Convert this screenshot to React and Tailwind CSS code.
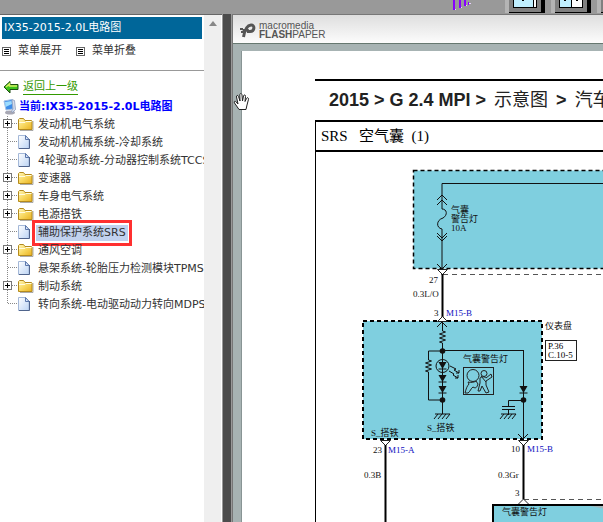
import clsx from 'clsx';

const menuItems = [
  { label: '发动机电气系统', folder: true },
  { label: '发动机机械系统-冷却系统' },
  { label: '4轮驱动系统-分动器控制系统TCCS' },
  { label: '变速器', folder: true },
  { label: '车身电气系统', folder: true },
  { label: '电源搭铁', folder: true },
  { label: '辅助保护系统SRS', selected: true },
  { label: '通风空调', folder: true },
  { label: '悬架系统-轮胎压力检测模块TPMS' },
  { label: '制动系统', folder: true },
  { label: '转向系统-电动驱动动力转向MDPS' },
];

function FolderIcon() {
  return (
    <svg width="16" height="16" viewBox="0 0 16 16" className="shrink-0">
      <defs>
        <linearGradient id="folder" x1="0" y1="0" x2="1" y2="1">
          <stop offset="0" stopColor="#fff6b8" />
          <stop offset="0.5" stopColor="#f8d860" />
          <stop offset="1" stopColor="#e8b020" />
        </linearGradient>
      </defs>
      <path d="M2 13.500h13V4" fill="none" stroke="#777" strokeOpacity="0.6" />
      <path d="M.5 12.500V2.500l1-1h4l1.500 2h6.500l.5.5v8.500z" fill="url(#folder)" stroke="#b48a1c" />
      <path d="M1 5.500h6l1-1h5.500" fill="none" stroke="#fffbe0" />
    </svg>
  );
}

function PageIcon() {
  return (
    <svg width="16" height="16" viewBox="0 0 16 16" className="shrink-0">
      <defs>
        <linearGradient id="sheet" x1="0" y1="0" x2="1" y2="1">
          <stop offset="0" stopColor="#fff" />
          <stop offset="1" stopColor="#bcd4f4" />
        </linearGradient>
      </defs>
      <path d="M.5.500h7l3.500 3.500v9.500H.5z" fill="url(#sheet)" stroke="#a4b8d8" />
      <path d="M1 13.500h10.500V4" fill="none" stroke="#50648c" />
      <path d="M7.500.500v4h3.500z" fill="#dfeafc" stroke="#5c78ac" />
    </svg>
  );
}

function BackIcon() {
  return (
    <svg width="16" height="14" viewBox="0 0 16 14" className="shrink-0">
      <path d="M1 7l6-5.500v3h8v5h-8v3.500z" fill="#3ec41c" stroke="#1c4c10" />
      <path d="M3 7l3.500-3v2h7.500" fill="none" stroke="#d4f060" strokeWidth="1.500" />
    </svg>
  );
}

function ComputerIcon() {
  return (
    <svg width="14" height="16" viewBox="0 0 14 16" className="shrink-0">
      <ellipse cx="7" cy="13.500" rx="5" ry="2" fill="#a8a8b4" />
      <path d="M1 2l8-1.500 1 9.500-7 1z" fill="#3c8ce8" stroke="#a4c0e4" />
      <path d="M2 3l6.500-1 .5 3-6.500 3z" fill="#9cdcff" />
      <path d="M9 .5l2.500 1 1 9-3 3-1-1.500 1.500-2z" fill="#d4dcec" stroke="#8094b8" strokeWidth=".7" />
    </svg>
  );
}

function ListIcon() {
  return (
    <svg width="9" height="9" viewBox="0 0 9 9" className="shrink-0" shapeRendering="crispEdges">
      <path d="M.5.5h8v8h-8z" fill="#fff" stroke="#666" />
      <path d="M2 2.500h5M2 4.500h5M2 6.500h5" stroke="#000" />
    </svg>
  );
}

function Branch({ folder, last }) {
  return (
    <svg width="15" height="18" viewBox="0 0 15 18" className="shrink-0" shapeRendering="crispEdges">
      <path d={last ? 'M4.500 0v8' : 'M4.500 0v18'} stroke="#888" strokeDasharray="1 1" />
      <path d="M5 7.500h10" stroke="#888" strokeDasharray="1 1" />
      {folder && (
        <>
          <path d="M.5 3.500h8v8h-8z" fill="#fff" stroke="#777" />
          <path d="M2 7.500h5M4.500 5v5" stroke="#000" />
        </>
      )}
    </svg>
  );
}

function MenuItem({ item, last }) {
  return (
    <li className="flex h-[18px] items-center">
      <Branch folder={item.folder} last={last} />
      <span className="flex w-[18px] shrink-0">{item.folder ? <FolderIcon /> : <PageIcon />}</span>
      <a
        href="#"
        className={clsx(
          'relative whitespace-nowrap px-[2px] leading-4 text-[#333]',
          item.selected && 'bg-[#c1d2ee]'
        )}
      >
        {item.label}
        {item.selected && <span className="absolute -inset-x-1 -inset-y-[5px] border-3 border-[#ff3030]" />}
      </a>
    </li>
  );
}

function Sidebar() {
  return (
    <aside className="flex w-[222px] shrink-0 border-t border-[#666] bg-white">
      <div className="min-w-0 flex-1 overflow-hidden">
        <h1 className="mx-[2px] mt-[2px] h-[22px] bg-[#069] pl-[2px] leading-[21px] text-white">
          IX35-2015-2.0L电路图
        </h1>
        <div className="flex h-8 items-center gap-[14px] border-b border-[#999] pb-[6px] pl-[2px] text-[#333]">
          <button className="flex items-center gap-[7px]">
            <ListIcon />
            菜单展开
          </button>
          <button className="flex items-center gap-[7px]">
            <ListIcon />
            菜单折叠
          </button>
        </div>
        <div className="flex h-[27px] items-center gap-1 pl-[3px] pt-1">
          <BackIcon />
          <a href="#" className="border-b border-[#390] leading-[15px] text-[#390]">
            返回上一级
          </a>
        </div>
        <div className="flex h-[18px] items-center gap-[2px] pl-[3px] font-bold text-[#00f]">
          <ComputerIcon />
          当前:IX35-2015-2.0L电路图
        </div>
        <ul className="pl-[3px]">
          {menuItems.map((item, i) => (
            <MenuItem key={item.label} item={item} last={i === menuItems.length - 1} />
          ))}
        </ul>
      </div>
      <div className="flex w-[18px] justify-center border-r border-white bg-[#efefef] pt-[6px]">
        <svg width="8" height="5" viewBox="0 0 8 5">
          <path d="M4 0l4 5H0z" fill="#888" />
        </svg>
      </div>
    </aside>
  );
}

function ViewButton({ split, label }) {
  return (
    <button aria-label={label} className="flex h-[13px] w-10 shrink-0">
      <svg width="40" height="13" viewBox="0 0 40 13" shapeRendering="crispEdges">
        <path d="M0 0h4v13H0z" fill="#b4b4b4" />
        <path d="M4 0h32v12H4z" fill="#808080" />
        <path d="M36 0h4v13H4v-1h32z" fill="#000" />
        <path d="M8 0h24v8H8z" fill="#000" />
        <path d="M9 0h22v7H9z" fill="#fff" />
        <path d={split ? 'M9 0h11v7H9z' : 'M9 0h19v7H9z'} fill="#bfefff" />
        <path d={split ? 'M20 0h1v7h-1zM13 0h2v1h-2zM25 0h2v1h-2z' : 'M28 0h1v7h-1zM17 0h2v1h-2z'} fill="#000" />
      </svg>
    </button>
  );
}

function TopBar() {
  return (
    <header className="flex h-[14px] shrink-0 items-start justify-end gap-[6px] overflow-hidden bg-[#999]">
      <svg width="20" height="11" viewBox="0 0 20 11" className="mr-[26px] shrink-0" shapeRendering="crispEdges">
        <path d="M0 0h2v10H0zM6 0h2v8H6zM11 0h2v6h-2zM15 2h1v3h-1z" fill="#80f" />
        <path d="M2 9h1v1H2zM8 7h1v1H8zM13 5h1v1h-1zM16 3h2v1h-2z" fill="#e8d0ff" />
      </svg>
      <ViewButton label="Single view" />
      <ViewButton label="Split view" split />
      <div className="w-[6px] shrink-0 overflow-hidden">
        <ViewButton label="Full view" />
      </div>
    </header>
  );
}

function PaperBar() {
  return (
    <div className="flex h-[29px] shrink-0 items-center gap-[3px] border-b border-[#667870] bg-linear-to-b from-[#dedede] to-[#fcfcfc] pl-[7px] pt-[2px] text-[#555]">
      <svg width="16" height="15" viewBox="0 0 16 15" aria-hidden="true">
        <path d="M3.500 14C4.500 8 6.500 2.500 11 2c4-.2 4 6.500-1 6.500H7" fill="none" stroke="#555" strokeWidth="3" />
        <path d="M2 6h7l-1 2.500H3M0 5h3v2H0zM1 8h3v2H1z" fill="#555" />
      </svg>
      <div className="font-['Liberation_Sans',Arial,sans-serif] text-[10px] leading-[9px]">
        <div>macromedia</div>
        <div>
          <b>FLASH</b>PAPER
        </div>
      </div>
    </div>
  );
}

const wire = { fill: 'none', stroke: '#111', strokeWidth: 1 };

function Ground({ x, y }) {
  return <path d={`M${x - 7} ${y}h15M${x - 4} ${y}l-4 5M${x} ${y}l-4 5M${x + 4} ${y}l-4 5M${x + 8} ${y}l-4 5`} {...wire} />;
}

function Diode({ x, y }) {
  return (
    <g>
      <path d={`M${x - 4} ${y}h8l-4 7z`} fill="#111" />
      <path d={`M${x - 4} ${y + 7}h8`} {...wire} />
    </g>
  );
}

function AirbagIcon() {
  return (
    <g fill="none" stroke="#222" strokeWidth="1">
      <rect x="463.500" y="367.500" width="30" height="27" />
      <circle cx="473" cy="375.500" r="6" />
      <path d="M468 382c3 1 7 0 8-1l2 3c-1 3-2 5-5 3-2 1-3 5-5 6h-3c1-4 2-7 4-9z" />
      <circle cx="484" cy="373.500" r="3" />
      <path d="M480 378c2-2 5-1 6 0l5-4 1 3-6 4v4l3 7-3 1-4-7-2 5h-2l2-8z" />
      <path d="M481 376l5 6" />
    </g>
  );
}

function WiringDiagram() {
  return (
    <svg
      width="287"
      height="370"
      viewBox="316 152 287 370"
      className="block shrink-0 overflow-visible font-['Liberation_Serif','Noto_Sans_CJK_SC',serif] text-[9px]"
    >
      {/* fuse box */}
      <rect x="413.500" y="170.500" width="260" height="98" fill="#7fcfdf" stroke="#000" strokeWidth="1.500" strokeDasharray="4 3" />
      <path d="M700 183.500H442V209c5 0 6 6 1 9-7 2-7 10-1 11v46" {...wire} />
      <path d="M437 200l5-5 5 5M437 205l5-5 5 5M437 233l5 5 5-5M437 236l5 5 5-5M437 264l5 5 5-5" {...wire} />
      <path d="M443 274.500h240" stroke="#555" strokeDasharray="5 4" />
      <path d="M437.500 269.500h10l-5 5z" fill="#fff" stroke="#222" />
      <path d="M442.500 274v43" stroke="#000" strokeWidth="2" />
      <g fill="#111">
        <text x="451" y="213">气囊</text>
        <text x="451" y="222">警告灯</text>
        <text x="451" y="231">10A</text>
        <text x="429" y="283">27</text>
        <text x="413" y="297">0.3L/O</text>
        <text x="434" y="316">3</text>
      </g>

      {/* instrument cluster */}
      <rect x="363" y="321" width="179" height="118" fill="#7fcfdf" stroke="#000" strokeWidth="2" strokeDasharray="4 3" />
      <path d="M437.500 321.500l5-5 5 5z" fill="#fff" stroke="#222" />
      <path d="M437 327l5-5 5 5M442.500 322v9l3 1-6 2 6 2-6 2 6 2-6 2 3 1v71" {...wire} />
      <path d="M442 350.500h82M428.500 351h14M428.500 351v9l3 1-6 2 6 2-6 2 6 2-6 2 3 1v28h14" {...wire} />
      <circle cx="442.500" cy="366" r="6.500" {...wire} />
      <Diode x={442.500} y={362} />
      <Diode x={442.500} y={375} />
      <Diode x={442.500} y={386} />
      <circle cx="442.500" cy="351" r="2.800" fill="#111" />
      <circle cx="442.500" cy="400" r="2.800" fill="#111" />
      <path d="M450 366l6 3-2 1 5 3M449 371l5 3-1 1 5 3M459 370v3h-3M458 375v3h-3" {...wire} />
      <Ground x={442} y={414} />
      <path d="M523.500 350v89" {...wire} />
      <Diode x={523.500} y={386} />
      <circle cx="523.500" cy="400" r="2.800" fill="#111" />
      <path d="M523 400.500h-14.500v6M502 406.500h13M502 409.500h13M508.500 409v6" {...wire} />
      <Ground x={508} y={414} />
      <AirbagIcon />
      <path d="M518 434l5 5 5-5" {...wire} />
      <g fill="#111">
        <text x="463" y="362">气囊警告灯</text>
        <text x="427" y="431">S_搭铁</text>
        <text x="371" y="436">S_搭铁</text>
        <text x="545" y="329">仪表盘</text>
      </g>
      <rect x="545.500" y="340.500" width="31" height="20" fill="#fff" stroke="#222" />
      <text x="548" y="349">P.36</text>
      <text x="548" y="358">C.10-5</text>

      {/* outgoing wires */}
      <path d="M380.500 440.500h10l-5 5zM518.500 440.500h10l-5 5z" fill="#fff" stroke="#222" />
      <path d="M385.500 445v80M523.500 445v54" stroke="#000" strokeWidth="2" />
      <path d="M524 499.500h150" stroke="#555" strokeDasharray="5 4" />
      <g fill="#111">
        <text x="373" y="453">23</text>
        <text x="364" y="478">0.3B</text>
        <text x="511" y="452">10</text>
        <text x="498" y="478">0.3Gr</text>
        <text x="515" y="496">3</text>
      </g>
      <g fill="#1010c0">
        <text x="446" y="316">M15-B</text>
        <text x="388" y="453">M15-A</text>
        <text x="527" y="452">M15-B</text>
      </g>
      <rect x="493" y="505" width="180" height="40" fill="#7fcfdf" stroke="#000" strokeWidth="2" />
      <path d="M590 506h30v6z" fill="#a0b8bc" />
      <path d="M518.500 504l5-5 5 5" fill="#fff" stroke="#222" />
      <text x="502" y="515" fill="#111">气囊警告灯</text>
    </svg>
  );
}

function HandCursor() {
  return (
    <svg width="17" height="18" viewBox="0 0 17 18" className="absolute left-0 top-[78px]">
      <path
        d="M5 15L1.500 10C.5 8.500 2 7.500 3.200 9L5 11 3.500 4c-.3-2 1.700-2 2-.5L7 8 6.800 2c0-2 2-2 2.200 0L9.500 8l1-5c.4-1.700 2.300-1.300 2 .5L12 8.500l1.500-3c.7-1.500 2.300-.8 2 .8L14 12l-1 4.500H6z"
        fill="#fff"
        stroke="#222"
      />
    </svg>
  );
}

function Viewer() {
  return (
    <main className="relative flex min-w-0 flex-1 flex-col border-l border-t border-[#777] bg-[#a7b3b3]">
      <PaperBar />
      <div className="ml-2 mt-[7px] min-h-0 flex-1 overflow-hidden border-l border-[#889494] bg-white pl-[73px] pt-7">
        <h2 className="flex h-[41px] gap-2 whitespace-nowrap border-t-2 border-black pl-[14px] font-['Liberation_Sans','Noto_Sans_CJK_SC',sans-serif] text-lg leading-[39px] text-[#222]">
          <b>2015 &gt; G 2.4 MPI &gt;</b>
          <span>示意图</span>
          <b>&gt;</b>
          <span>汽车</span>
        </h2>
        <section className="border-l border-t-2 border-black">
          <h3 className="h-[30px] whitespace-pre border-b-2 border-black pl-[5px] font-['Liberation_Serif','Noto_Sans_CJK_SC',serif] text-[15px] leading-7 text-black">
            SRS   空气囊  (1)
          </h3>
          <WiringDiagram />
        </section>
      </div>
      <HandCursor />
    </main>
  );
}

export default function App() {
  return (
    <div className="flex h-screen flex-col overflow-hidden bg-white font-['DejaVu_Sans','Noto_Sans_CJK_SC',sans-serif] text-[11px]">
      <TopBar />
      <div className="flex min-h-0 flex-1">
        <Sidebar />
        <div className="w-[10px] shrink-0 border-x border-[#999] bg-[#4c4c4c]" />
        <Viewer />
      </div>
    </div>
  );
}
